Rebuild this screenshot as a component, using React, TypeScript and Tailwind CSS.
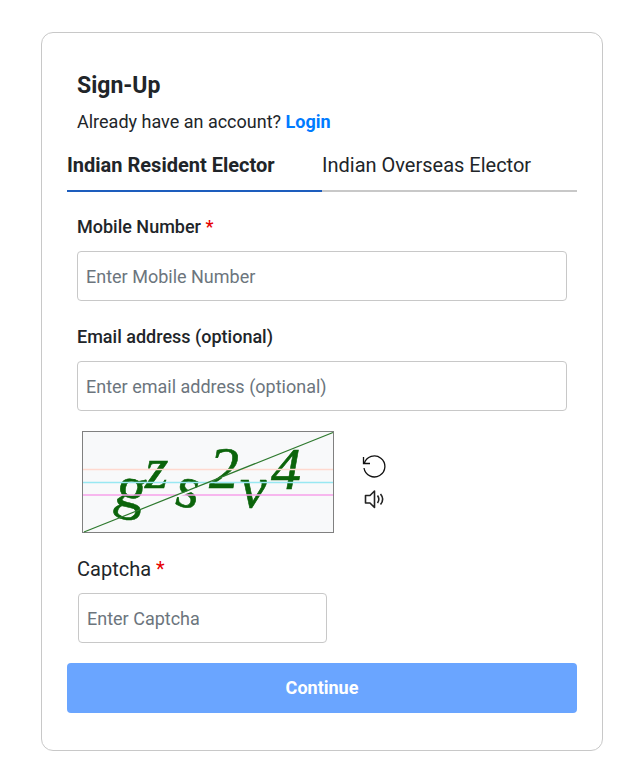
import { useState } from 'react';

const TABS = ['Indian Resident Elector', 'Indian Overseas Elector'];

const CAPTCHA_CHARS = [
  { char: 'g', x: 32, y: 76, style: 'normal', transform: 'rotate(14 47 69)' },
  { char: 'z', x: 63, y: 57, style: 'italic' },
  { char: 's', x: 94, y: 76, style: 'normal', transform: 'rotate(14 105 62)' },
  { char: '2', x: 127, y: 57, style: 'italic' },
  { char: 'v', x: 158, y: 76, style: 'italic' },
  { char: '4', x: 189, y: 58, style: 'italic' },
];

const INPUT_CLASS =
  'h-[50px] w-full rounded border border-[#c8c8c8] bg-white px-2 text-lg text-[#212529] placeholder:text-[#6c757d]';

function CaptchaImage() {
  return (
    <svg
      width="252"
      height="102"
      viewBox="0 0 252 102"
      role="img"
      aria-label="Captcha image"
      className="shrink-0"
    >
      <rect x="0.5" y="0.5" width="251" height="101" fill="#f8f9fa" stroke="#808080" />
      <g
        fill="#0b640b"
        stroke="#0b640b"
        strokeWidth="0.6"
        fontFamily="'Liberation Serif', serif"
        fontSize="60"
      >
        {CAPTCHA_CHARS.map((c) => (
          <text key={c.char} x={c.x} y={c.y} fontStyle={c.style} transform={c.transform}>
            {c.char}
          </text>
        ))}
      </g>
      <path d="M1 38.5H251" stroke="#ffd9cf" strokeWidth="1.5" />
      <path d="M1 51.5H251" stroke="#98e8f2" strokeWidth="1.5" />
      <path d="M1 64H251" stroke="#f7a0ea" strokeWidth="1.6" />
      <path d="M96 65L125 53.5M140 47.5L160 39.5" stroke="#f8f9fa" strokeWidth="2" />
      <path d="M2 101L251 1.5" stroke="#2f7a2f" strokeWidth="1.2" />
    </svg>
  );
}

function RefreshIcon() {
  return (
    <svg width="24" height="24" viewBox="0 0 24 24" fill="none" stroke="#111" strokeWidth="1.3">
      <path d="M2.3 8.5A10.5 10.5 0 1 1 2 13" />
      <path d="M1.5 2v6.5H8" />
    </svg>
  );
}

function SpeakerIcon() {
  return (
    <svg width="24" height="24" viewBox="0 0 24 24" fill="none" stroke="#222" strokeWidth="1.6">
      <path d="M3.5 8.5h4.5l4.5-4.5v16.5l-4.5-4.5H3.5z" strokeLinejoin="round" />
      <path d="M15.5 8.5c1.6 2.2 1.6 5.3 0 7.5M18.5 7c2.7 3.2 2.7 7.3 0 10.5" />
    </svg>
  );
}

function Required() {
  return <span className="text-[#e60000]">*</span>;
}

export default function App() {
  const [tab, setTab] = useState(0);

  return (
    <main className="bg-white pt-8 pr-[23px] pb-4 pl-[41px] font-['Roboto',sans-serif] text-lg leading-6 text-[#212529]">
      <form
        className="rounded-xl border border-[#c8c8c8] px-[25px] pt-[39px] pb-[37px]"
        onSubmit={(e) => e.preventDefault()}
      >
        <header className="px-2.5">
          <h1 className="text-[23px] leading-7 font-bold">Sign-Up</h1>
          <p className="mt-2.5">
            Already have an account?{' '}
            <a href="#login" className="font-bold text-[#007bff]">
              Login
            </a>
          </p>
        </header>

        <div role="tablist" className="mt-4 grid grid-cols-2">
          {TABS.map((name, i) => (
            <button
              key={name}
              type="button"
              role="tab"
              aria-selected={tab === i}
              onClick={() => setTab(i)}
              className={
                tab === i
                  ? 'border-b-2 border-[#1d5dbd] pb-2.5 text-left text-xl leading-[30px] font-bold'
                  : 'border-b-2 border-[#c8c8c8] pb-2.5 text-left text-xl leading-[30px]'
              }
            >
              {name}
            </button>
          ))}
        </div>

        <div className="px-2.5">
          <div className="mt-[23px] flex flex-col gap-3">
            <label htmlFor="mobile" className="font-medium">
              Mobile Number <Required />
            </label>
            <input id="mobile" type="tel" placeholder="Enter Mobile Number" className={INPUT_CLASS} />
          </div>

          <div className="mt-6 flex flex-col gap-3">
            <label htmlFor="email" className="font-medium">
              Email address (optional)
            </label>
            <input
              id="email"
              type="email"
              placeholder="Enter email address (optional)"
              className={INPUT_CLASS}
            />
          </div>

          <div className="mt-5 flex items-center gap-7 pl-[5px]">
            <CaptchaImage />
            <div className="flex flex-col gap-2 pt-0.5">
              <button type="button" aria-label="Refresh captcha">
                <RefreshIcon />
              </button>
              <button type="button" aria-label="Play captcha audio">
                <SpeakerIcon />
              </button>
            </div>
          </div>

          <div className="mt-6 flex flex-col gap-3">
            <label htmlFor="captcha" className="text-xl leading-6">
              Captcha <Required />
            </label>
            <div className="w-[51%] pl-px">
              <input id="captcha" type="text" placeholder="Enter Captcha" className={INPUT_CLASS} />
            </div>
          </div>
        </div>

        <button
          type="submit"
          className="mt-5 h-[50px] w-full rounded bg-[#6aa5ff] text-lg font-bold text-white"
        >
          Continue
        </button>
      </form>
    </main>
  );
}
